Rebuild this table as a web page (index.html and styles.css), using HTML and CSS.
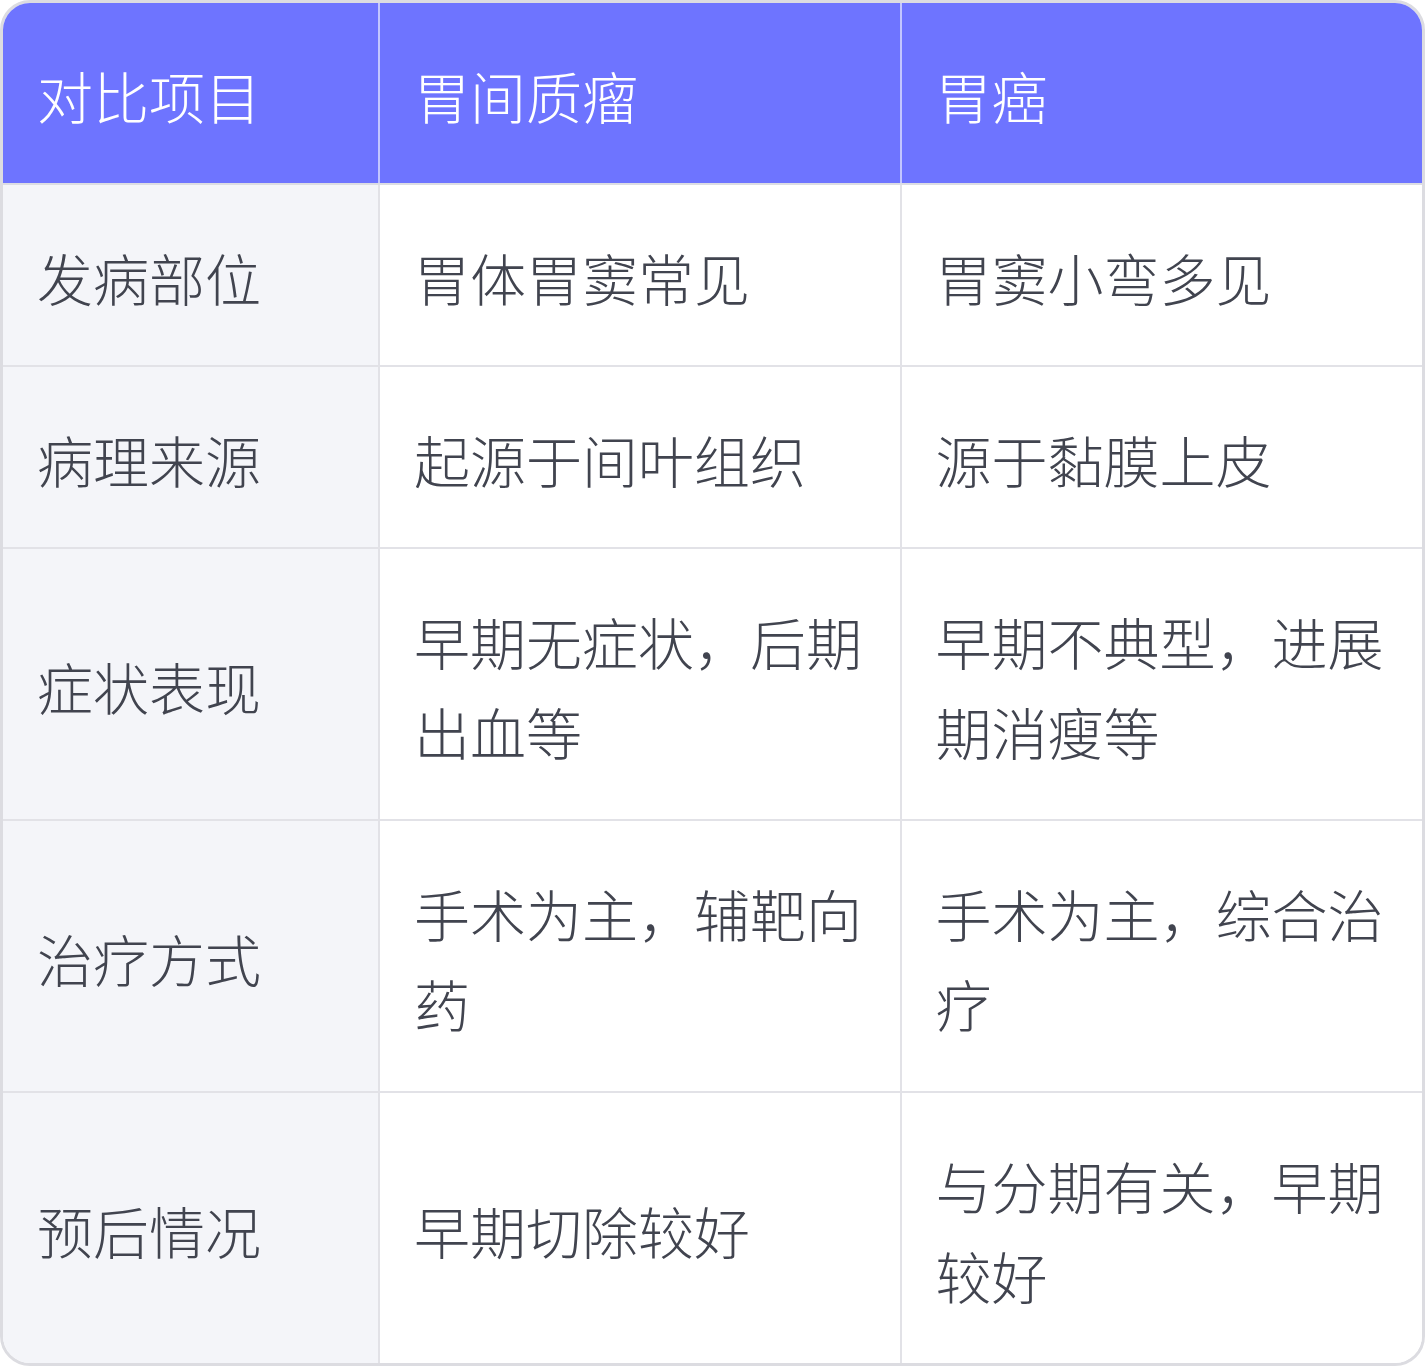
FILE: index.html
```html
<!DOCTYPE html>
<html lang="zh">
<head>
<meta charset="utf-8">
<link rel="stylesheet" href="styles.css">
</head>
<body>
<div class="wrap">
<table class="cmp">
  <thead>
    <tr><th>对比项目</th><th>胃间质瘤</th><th>胃癌</th></tr>
  </thead>
  <tbody>
    <tr><td class="k">发病部位</td><td>胃体胃窦常见</td><td>胃窦小弯多见</td></tr>
    <tr><td class="k">病理来源</td><td>起源于间叶组织</td><td>源于黏膜上皮</td></tr>
    <tr><td class="k">症状表现</td><td>早期无症状，后期出血等</td><td>早期不典型，进展期消瘦等</td></tr>
    <tr><td class="k">治疗方式</td><td>手术为主，辅靶向药</td><td>手术为主，综合治疗</td></tr>
    <tr><td class="k">预后情况</td><td>早期切除较好</td><td>与分期有关，早期较好</td></tr>
  </tbody>
</table>
</div>
</body>
</html>
```

FILE: styles.css
```css
html, body {
  margin: 0;
  padding: 0;
  background: #ffffff;
}
.wrap {
  width: 1425px;
  height: 1366px;
  box-sizing: border-box;
  border: 3px solid #dcdce1;
  border-radius: 30px;
  overflow: hidden;
}
.cmp {
  width: 100%;
  border-collapse: collapse;
  table-layout: fixed;
  font-family: "Noto Sans CJK SC", "Noto Sans", sans-serif;
  font-weight: 300;
  font-size: 56px;
  line-height: 90px;
  color: #41444f;
}
.cmp th:nth-child(1) { width: 376px; }
.cmp th, .cmp td {
  padding: 47px 33px 43px 34px;
  text-align: left;
  vertical-align: middle;
  box-sizing: border-box;
}
.cmp th {
  background: #6e74ff;
  color: #ffffff;
  font-weight: 300;
  border-left: 2px solid #c3c6ff;
  border-bottom: 2px solid #dcdde3;
}
.cmp th:first-child { border-left: none; }
.cmp td {
  background: #ffffff;
  border-left: 2px solid #e2e2e7;
  border-top: 2px solid #e2e2e7;
}
.cmp td.k {
  background: #f4f5f9;
  border-left: none;
}
.cmp tbody tr:first-child td { border-top: none; }
```
